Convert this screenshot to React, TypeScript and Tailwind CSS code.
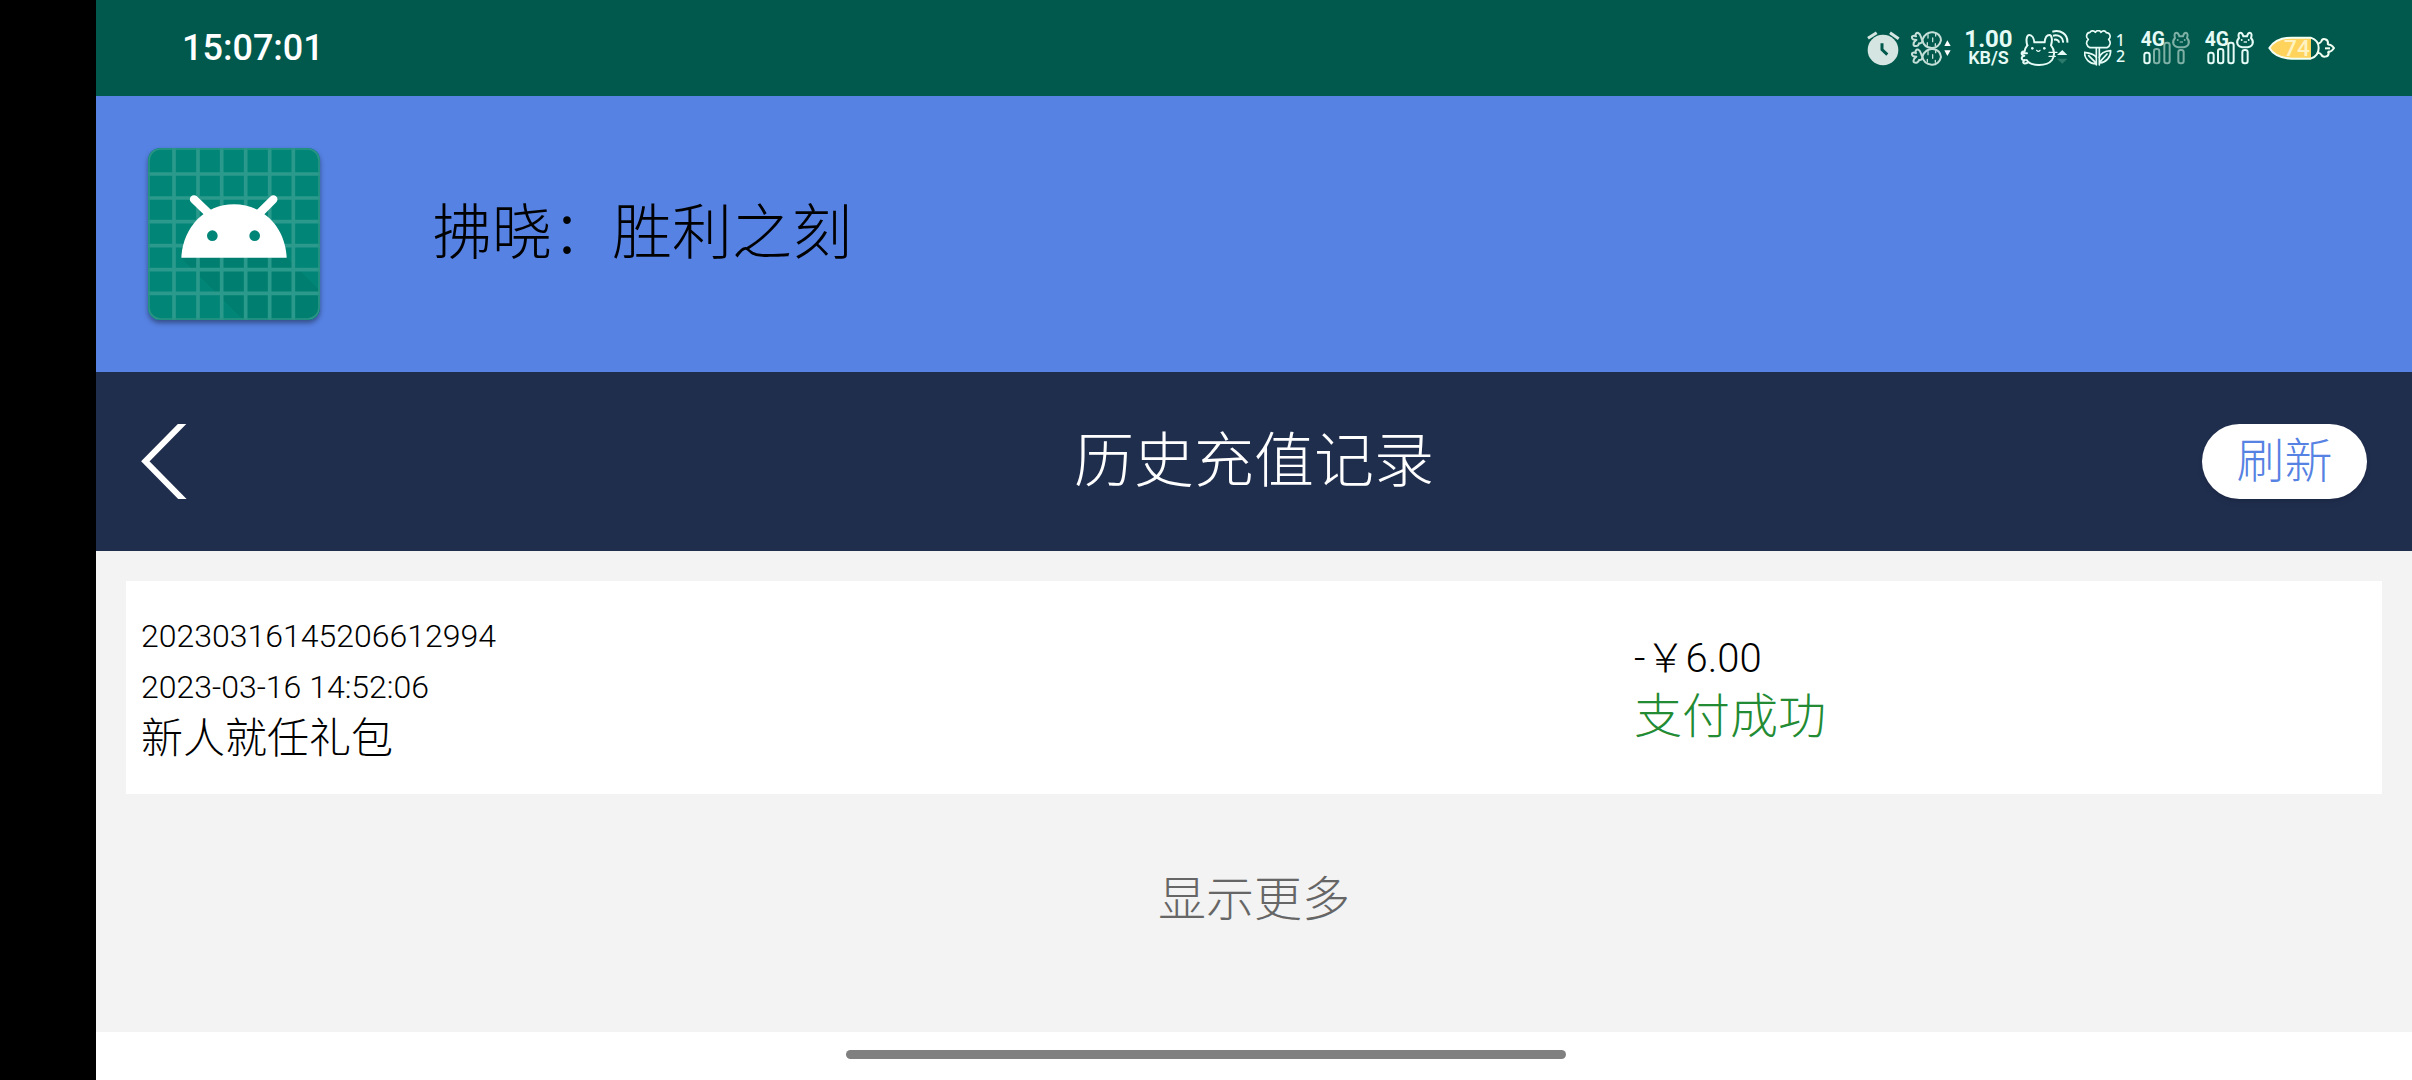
import type { ReactNode } from "react";

type Order = {
  id: string;
  time: string;
  product: string;
  price: string;
  status: string;
};

const orders: Order[] = [
  {
    id: "20230316145206612994",
    time: "2023-03-16 14:52:06",
    product: "新人就任礼包",
    price: "-￥6.00",
    status: "支付成功",
  },
];

function AlarmIcon() {
  return (
    <svg viewBox="51 60 111 108" className="h-9 w-[37px]" aria-hidden="true">
      <circle cx="99" cy="120" r="46" fill="#d5e6e2" />
      <path d="M54 85 L80 68 M120 68 L146 86" stroke="#d5e6e2" strokeWidth="9" fill="none" />
      <path d="M96 100 V119 L112 134" stroke="#00594c" strokeWidth="9" fill="none" />
    </svg>
  );
}

function CarrotPair() {
  return (
    <g fill="none" stroke="#c4ded8" strokeWidth="6" strokeLinejoin="round" strokeLinecap="round">
      <path d="M217 90 C222 74 236 65 249 67 C263 69 272 79 273 91 C270 105 259 115 245 114 C231 113 220 106 217 90 Z" />
      <path d="M217 90 C212 85 214 73 205 69 C198 67 195 74 198 79 C190 75 183 79 187 86 C189 91 195 88 199 90 C193 94 189 99 191 106 C198 111 206 107 207 100 C214 101 218 96 217 90 Z" />
      <path d="M234 74 V84 M248 84 V95 M232 98 V106 M257 72 V78 M256 101 V107" strokeWidth="4" />
    </g>
  );
}

function TrafficIcon() {
  return (
    <svg viewBox="183 60 138 108" className="h-9 w-[46px]" aria-hidden="true">
      <CarrotPair />
      <g transform="translate(0 50)">
        <CarrotPair />
      </g>
      <path d="M283 108 L292 91 L302 108 Z M283 121 L292 138 L302 121 Z" fill="#fff" />
    </svg>
  );
}

function WifiCatIcon() {
  return (
    <svg viewBox="510 60 171 108" className="h-9 w-[57px]" aria-hidden="true">
      <g fill="none" stroke="#e6fbf6" strokeWidth="6" strokeLinecap="round" strokeLinejoin="round">
        <path d="M532 106 C527 91 530 75 538 75 C547 75 552 87 553 97 H584 C585 86 590 75 598 75 C606 75 608 91 603 106 C615 120 614 139 606 150 C596 163 582 165 567 165 C550 165 536 160 530 150" />
        <path d="M532 106 C527 112 524 118 524 124 C512 122 512 137 523 137 C511 139 514 153 525 150 C514 156 521 165 533 158 M520 130 H531" />
        <path d="M597 127 H621 M597 139 H616" strokeWidth="4" />
        <path d="M560 121 Q565 127 570 121" strokeWidth="4" />
        <path d="M607 65 C632 58 654 73 652 98 M609 77 C627 73 641 83 639 98 M612 89 C620 87 627 91 627 98" strokeLinecap="butt" />
      </g>
      <circle cx="547" cy="115" r="4" fill="#e6fbf6" />
      <circle cx="583" cy="115" r="4" fill="#e6fbf6" />
      <path d="M621 135 L637 120 L652 135 Z" fill="#e6fbf6" />
      <path d="M621 146 L637 161 L652 146 Z" fill="#2c7a6c" />
    </svg>
  );
}

function FlowerIcon() {
  return (
    <svg viewBox="42 60 147 108" className="h-9 w-[49px]" aria-hidden="true">
      <g fill="none" stroke="#e6fbf6" strokeWidth="5" strokeLinejoin="round" strokeLinecap="round">
        <path d="M55 88 C47 83 48 68 60 67 C64 60 73 62 76 67 C80 60 90 60 93 67 C98 60 107 62 109 68 C122 69 123 82 116 88 C123 96 122 108 111 113 H60 C48 108 47 96 55 88 Z" />
        <path d="M79 114 V165 M88 114 V165" />
        <path d="M79 162 C58 161 44 147 43 127 C59 129 74 133 79 142 M56 137 L77 158" />
        <path d="M88 142 C92 129 106 123 122 122 C122 141 110 156 89 159 M111 132 L91 154" />
      </g>
      <g fill="#e6fbf6" fontFamily="Noto Sans, sans-serif" fontWeight="500" fontSize="48" textAnchor="middle">
        <text x="151" y="108">1</text>
        <text x="152" y="156">2</text>
      </g>
    </svg>
  );
}

function SignalIcon({ dim }: { dim: boolean }) {
  const weak = dim ? "#7fb0a6" : "#e6fbf6";
  return (
    <svg viewBox="210 60 171 108" className="h-9 w-[57px]" role="img" aria-label="4G">
      <text x="212" y="108" fill="#e6fbf6" fontFamily="Roboto, sans-serif" fontWeight="700" fontSize="58">
        4G
      </text>
      <g fill="none" strokeWidth="6">
        <rect x="223" y="128" width="16" height="32" rx="7" stroke="#e6fbf6" />
        <rect x="252" y="117" width="16" height="43" rx="7" stroke={weak} />
        <rect x="283" y="98" width="16" height="62" rx="7" stroke={weak} />
        <rect x="325" y="120" width="16" height="40" rx="7" stroke={weak} />
        <path
          d="M315 84 C312 76 314 68 319 68 C324 68 327 75 328 79 H339 C340 75 343 68 348 68 C353 68 354 76 351 84 C361 95 359 112 333 112 C307 112 305 95 315 84 Z"
          stroke={weak}
        />
      </g>
      <g fill={weak}>
        <circle cx="323" cy="90" r="3" />
        <circle cx="344" cy="90" r="3" />
        <rect x="329" y="94" width="10" height="4" />
      </g>
    </svg>
  );
}

function BatteryIcon() {
  return (
    <svg viewBox="594 60 201 108" className="h-9 w-[67px]" role="img" aria-label="74%">
      <path d="M598 114 C612 92 635 83 665 83 H723 V146 H665 C635 145 612 137 598 114 Z" fill="#ffd35c" />
      <text x="681" y="138" fill="#fff3c4" fontFamily="Roboto, sans-serif" fontWeight="500" fontSize="68" textAnchor="middle">
        74
      </text>
      <g fill="none" stroke="#f4fff4" strokeWidth="6" strokeLinejoin="round">
        <path d="M598 114 C612 92 635 83 665 83 H722 C738 88 746 99 746 114 C746 130 738 141 722 146 H665 C635 145 612 137 598 114 Z" />
        <path d="M745 101 C750 99 752 98 754 94 C757 83 774 86 774 99 C772 102 775 105 779 104 C784 104 788 109 792 114 C788 120 784 125 779 125 C775 124 773 127 776 130 C775 142 757 143 754 134 C752 130 749 129 744 128" />
        <path d="M765 115 H780" />
      </g>
    </svg>
  );
}

function AppIcon() {
  const lines = [78, 150, 221, 293, 365, 436];
  return (
    <svg
      viewBox="0 0 516 516"
      className="size-[172px] shrink-0 rounded-xl shadow-[0_3px_5px_rgba(0,0,0,0.4)]"
      role="img"
      aria-label="Android"
    >
      <rect width="516" height="516" fill="#008577" />
      <path d="M100 329 H416 L516 429 V516 H287 Z" fill="#007a6a" opacity="0.5" />
      <g stroke="#2b9a8c" strokeWidth="11">
        {lines.map((p) => (
          <path key={p} d={`M${p} 0 V516 M0 ${p} H516`} />
        ))}
      </g>
      <rect x="3" y="3" width="510" height="510" rx="34" fill="none" stroke="#2b9485" strokeWidth="5" />
      <path d="M138 154 L184 198 M376 154 L332 198" stroke="#fff" strokeWidth="25" strokeLinecap="round" />
      <path d="M100 329 C104 240 168 169 258 169 C348 169 412 240 416 329 Z" fill="#fff" />
      <circle cx="193" cy="263" r="16" fill="#008577" />
      <circle cx="320" cy="263" r="16" fill="#008577" />
    </svg>
  );
}

function StatusBar() {
  return (
    <div className="flex h-24 items-center justify-between bg-[#00594c] pr-[77px] pl-[86px] text-[#e6fbf6]">
      <time className="text-4xl font-medium text-white">15:07:01</time>
      <div className="flex items-center gap-[7px]">
        <AlarmIcon />
        <TrafficIcon />
        <div className="flex w-[49px] flex-col items-center font-bold">
          <span className="text-2xl leading-[19px]">1.00</span>
          <span className="text-lg leading-[17px] font-semibold">KB/S</span>
        </div>
        <WifiCatIcon />
        <FlowerIcon />
        <SignalIcon dim />
        <SignalIcon dim={false} />
        <BatteryIcon />
      </div>
    </div>
  );
}

function OrderCard({ order }: { order: Order }) {
  return (
    <li className="grid grid-cols-[2fr_1fr] items-center bg-white py-[30px] text-black">
      <div className="pl-[15px] text-[32px] leading-[51px]">
        <p>{order.id}</p>
        <p>{order.time}</p>
        <p className="text-[42px] leading-[51px]">{order.product}</p>
      </div>
      <div className="pl-1 leading-[58px]">
        <p className="text-[40px]">{order.price}</p>
        <p className="text-5xl leading-[58px] text-[#228b33]">{order.status}</p>
      </div>
    </li>
  );
}

function Screen({ children }: { children: ReactNode }) {
  return (
    <div className="min-h-screen bg-black pl-24 font-['Roboto','Noto_Sans_CJK_SC',sans-serif] font-light">
      <div className="flex min-h-screen flex-col bg-white">{children}</div>
    </div>
  );
}

export default function App() {
  return (
    <Screen>
      <StatusBar />
      <header className="flex items-center gap-28 bg-[#5682e3] p-[52px]">
        <AppIcon />
        <h1 className="text-6xl text-black">拂晓：胜利之刻</h1>
      </header>
      <nav className="grid grid-cols-[1fr_auto_1fr] items-center bg-[#202e4e] px-[45px] py-[52px]">
        <button type="button" aria-label="返回" className="justify-self-start">
          <svg viewBox="153 132 138 225" className="h-[75px] w-[46px]" aria-hidden="true">
            <path d="M288 120 L166 244 L288 368" fill="none" stroke="#fff" strokeWidth="18" />
          </svg>
        </button>
        <h2 className="text-6xl text-white">历史充值记录</h2>
        <button
          type="button"
          className="h-[75px] w-[165px] justify-self-end rounded-full bg-white text-5xl text-[#5682e3] shadow-md"
        >
          刷新
        </button>
      </nav>
      <main className="flex-1 bg-[#f3f3f3] p-[30px]">
        <ul>
          {orders.map((order) => (
            <OrderCard key={order.id} order={order} />
          ))}
        </ul>
        <div className="mt-[77px] text-center">
          <button type="button" className="text-5xl leading-[58px] text-[#666]">
            显示更多
          </button>
        </div>
      </main>
      <footer className="flex h-12 items-center justify-center pt-[14px] pr-24 pb-[17px]">
        <div className="h-[9px] w-full max-w-[720px] rounded-full bg-[#808080]" />
      </footer>
    </Screen>
  );
}
